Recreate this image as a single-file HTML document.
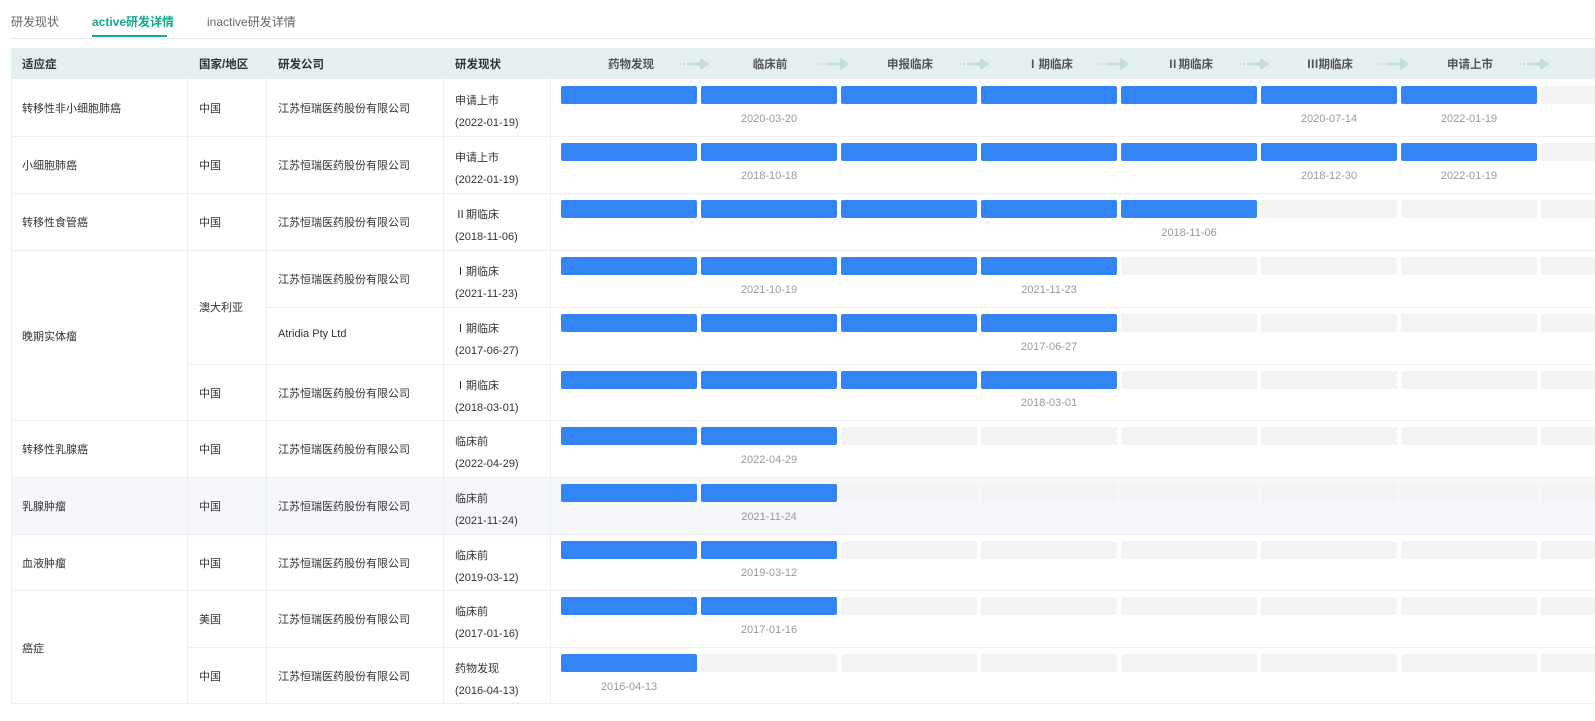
<!DOCTYPE html>
<html><head><meta charset="utf-8">
<style>
*{margin:0;padding:0;box-sizing:border-box}
body{width:1595px;height:721px;overflow:hidden;background:#fff;font-family:"Liberation Sans","Noto Sans CJK SC",sans-serif;color:#333;position:relative}
.a{position:absolute;white-space:nowrap}
.tab{top:13px;font-size:12px;color:#666}
.hd{position:absolute;left:11px;top:48px;width:1584px;height:31px;background:#e6efef}
.ht{position:absolute;top:56px;font-size:11.5px;font-weight:bold;color:#333}
.ph{position:absolute;top:56px;font-size:11.5px;font-weight:bold;color:#555;transform:translateX(-50%)}
.hl{position:absolute;height:1px;background:#ebeef2}
.vl{position:absolute;width:1px;background:#ebeef2}
.c{position:absolute;font-size:11px;color:#333}
.d{position:absolute;font-size:11px;color:#999;transform:translateX(-50%)}
.b{position:absolute;width:136px;height:18px;border-radius:2px}
.f{background:#3384f5}.e{background:#f3f3f3}
.arr{position:absolute;top:58px;width:36px;height:12px}
</style></head><body>
<div class="a tab" style="left:11px">研发现状</div>
<div class="a tab" style="left:92px;color:#13a88f;font-weight:bold">active研发详情</div>
<div class="a" style="left:92px;top:35px;width:75px;height:2px;background:#13a88f"></div>
<div class="a tab" style="left:207px">inactive研发详情</div>
<div class="a" style="left:11px;top:38px;width:1584px;height:1px;background:#e8e8ee"></div>

<div class="hd"></div>
<div class="ht" style="left:22px">适应症</div>
<div class="ht" style="left:199px">国家/地区</div>
<div class="ht" style="left:278px">研发公司</div>
<div class="ht" style="left:455px">研发现状</div>
<div class="ph" style="left:631px">药物发现</div>
<div class="ph" style="left:770px">临床前</div>
<div class="ph" style="left:910px">申报临床</div>
<div class="ph" style="left:1050px">Ⅰ期临床</div>
<div class="ph" style="left:1190px">Ⅱ期临床</div>
<div class="ph" style="left:1330px">Ⅲ期临床</div>
<div class="ph" style="left:1470px">申请上市</div>
<div id="arrows"></div>

<div class="a" style="left:11px;top:477px;width:1584px;height:57px;background:#f5f7fa"></div>
<div id="grid"></div>
<div id="bars"></div>

<div class="c" style="left:22px;top:100px">转移性非小细胞肺癌</div>
<div class="c" style="left:22px;top:157px">小细胞肺癌</div>
<div class="c" style="left:22px;top:214px">转移性食管癌</div>
<div class="c" style="left:22px;top:328px">晚期实体瘤</div>
<div class="c" style="left:22px;top:441px">转移性乳腺癌</div>
<div class="c" style="left:22px;top:498px">乳腺肿瘤</div>
<div class="c" style="left:22px;top:555px">血液肿瘤</div>
<div class="c" style="left:22px;top:640px">癌症</div>

<div class="c" style="left:199px;top:100px">中国</div>
<div class="c" style="left:199px;top:157px">中国</div>
<div class="c" style="left:199px;top:214px">中国</div>
<div class="c" style="left:199px;top:299px">澳大利亚</div>
<div class="c" style="left:199px;top:385px">中国</div>
<div class="c" style="left:199px;top:441px">中国</div>
<div class="c" style="left:199px;top:498px">中国</div>
<div class="c" style="left:199px;top:555px">中国</div>
<div class="c" style="left:199px;top:611px">美国</div>
<div class="c" style="left:199px;top:668px">中国</div>

<div class="c" style="left:278px;top:100px">江苏恒瑞医药股份有限公司</div>
<div class="c" style="left:278px;top:157px">江苏恒瑞医药股份有限公司</div>
<div class="c" style="left:278px;top:214px">江苏恒瑞医药股份有限公司</div>
<div class="c" style="left:278px;top:271px">江苏恒瑞医药股份有限公司</div>
<div class="c" style="left:278px;top:328px">Atridia Pty Ltd</div>
<div class="c" style="left:278px;top:385px">江苏恒瑞医药股份有限公司</div>
<div class="c" style="left:278px;top:441px">江苏恒瑞医药股份有限公司</div>
<div class="c" style="left:278px;top:498px">江苏恒瑞医药股份有限公司</div>
<div class="c" style="left:278px;top:555px">江苏恒瑞医药股份有限公司</div>
<div class="c" style="left:278px;top:611px">江苏恒瑞医药股份有限公司</div>
<div class="c" style="left:278px;top:668px">江苏恒瑞医药股份有限公司</div>

<div class="c" style="left:455px;top:90px;line-height:22px">申请上市<br>(2022-01-19)</div>
<div class="c" style="left:455px;top:147px;line-height:22px">申请上市<br>(2022-01-19)</div>
<div class="c" style="left:455px;top:204px;line-height:22px">Ⅱ期临床<br>(2018-11-06)</div>
<div class="c" style="left:455px;top:261px;line-height:22px">Ⅰ期临床<br>(2021-11-23)</div>
<div class="c" style="left:455px;top:318px;line-height:22px">Ⅰ期临床<br>(2017-06-27)</div>
<div class="c" style="left:455px;top:375px;line-height:22px">Ⅰ期临床<br>(2018-03-01)</div>
<div class="c" style="left:455px;top:431px;line-height:22px">临床前<br>(2022-04-29)</div>
<div class="c" style="left:455px;top:488px;line-height:22px">临床前<br>(2021-11-24)</div>
<div class="c" style="left:455px;top:545px;line-height:22px">临床前<br>(2019-03-12)</div>
<div class="c" style="left:455px;top:601px;line-height:22px">临床前<br>(2017-01-16)</div>
<div class="c" style="left:455px;top:658px;line-height:22px">药物发现<br>(2016-04-13)</div>

<div class="d" style="left:769px;top:113px">2020-03-20</div>
<div class="d" style="left:1329px;top:113px">2020-07-14</div>
<div class="d" style="left:1469px;top:113px">2022-01-19</div>
<div class="d" style="left:769px;top:170px">2018-10-18</div>
<div class="d" style="left:1329px;top:170px">2018-12-30</div>
<div class="d" style="left:1469px;top:170px">2022-01-19</div>
<div class="d" style="left:1189px;top:227px">2018-11-06</div>
<div class="d" style="left:769px;top:284px">2021-10-19</div>
<div class="d" style="left:1049px;top:284px">2021-11-23</div>
<div class="d" style="left:1049px;top:341px">2017-06-27</div>
<div class="d" style="left:1049px;top:397px">2018-03-01</div>
<div class="d" style="left:769px;top:454px">2022-04-29</div>
<div class="d" style="left:769px;top:511px">2021-11-24</div>
<div class="d" style="left:769px;top:567px">2019-03-12</div>
<div class="d" style="left:769px;top:624px">2017-01-16</div>
<div class="d" style="left:629px;top:681px">2016-04-13</div>

<script>
var tops=[79,136,193,250,307,364,420,477,534,590,647],fill=[7,7,5,4,4,4,2,2,2,2,1];
var h='';
tops.forEach(function(t,i){for(var k=0;k<8;k++){h+='<div class="b '+(k<fill[i]?'f':'e')+'" style="left:'+(561+140*k)+'px;top:'+(t+7)+'px"></div>';}});
document.getElementById('bars').innerHTML=h;
var g='';
var ends=[[136,11],[193,11],[250,11],[307,266],[364,187],[420,11],[477,11],[534,11],[590,11],[647,187],[703,11]];
ends.forEach(function(e){g+='<div class="hl" style="left:'+e[1]+'px;top:'+e[0]+'px;width:'+(1595-e[1])+'px"></div>';});
[11,187,266,443,550].forEach(function(x){g+='<div class="vl" style="left:'+x+'px;top:79px;height:624px"></div>';});
document.getElementById('grid').innerHTML=g;
var a='';
[695,835,975,1115,1255,1395,1535].forEach(function(x){a+='<svg class="arr" style="left:'+(x-18)+'px" viewBox="0 0 36 12"><g fill="#c5ddd9"><rect x="2" y="5" width="2" height="2"/><rect x="6" y="5" width="2" height="2"/><rect x="10" y="4.5" width="14" height="3"/><polygon points="23,0 33,6 23,12"/></g></svg>';});
document.getElementById('arrows').innerHTML=a;
</script>
</body></html>
